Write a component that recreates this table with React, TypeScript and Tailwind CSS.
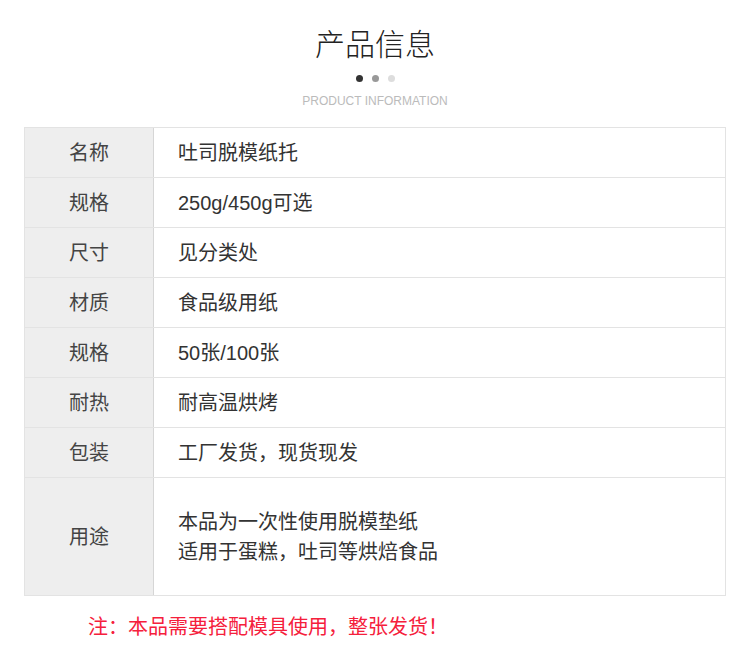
import React from "react";

const rows: [string, string][] = [
  ["名称", "吐司脱模纸托"],
  ["规格", "250g/450g可选"],
  ["尺寸", "见分类处"],
  ["材质", "食品级用纸"],
  ["规格", "50张/100张"],
  ["耐热", "耐高温烘烤"],
  ["包装", "工厂发货，现货现发"],
];

const font = { fontFamily: '"Liberation Sans", "Noto Sans CJK SC", sans-serif' };

export default function App() {
  return (
    <div className="w-[750px] h-[657px] bg-white" style={font}>
      <div className="pt-[21px] flex flex-col items-center">
        <div className="text-[30px] leading-[42px] text-[#222]" style={{ fontFamily: '"Noto Sans CJK SC", sans-serif', fontWeight: 300 }}>产品信息</div>
        <div className="mt-[12px] flex gap-[9px]">
          <span className="w-[7px] h-[7px] rounded-full bg-[#333]" />
          <span className="w-[7px] h-[7px] rounded-full bg-[#999]" />
          <span className="w-[7px] h-[7px] rounded-full bg-[#ddd]" />
        </div>
        <div className="mt-[12px] text-[12px] leading-[14px] text-[#bbb]">
          PRODUCT INFORMATION
        </div>
      </div>
      <div className="mx-[24px] mt-[19px] w-[702px] border border-[#e3e3e3]">
        {rows.map(([k, v], i) => (
          <div key={i} className="flex h-[50px] border-b border-[#e3e3e3]">
            <div className="w-[129px] bg-[#eeeeee] border-r border-[#d6d6d6] flex items-center justify-center text-[20px] text-[#444]">
              {k}
            </div>
            <div className="flex-1 flex items-center pl-[24px] text-[20px] text-[#333]">{v}</div>
          </div>
        ))}
        <div className="flex h-[117px]">
          <div className="w-[129px] bg-[#eeeeee] border-r border-[#d6d6d6] flex items-center justify-center text-[20px] text-[#444]">
            用途
          </div>
          <div className="flex-1 flex flex-col justify-center pl-[24px] text-[20px] leading-[30px] text-[#333]">
            <div>本品为一次性使用脱模垫纸</div>
            <div>适用于蛋糕，吐司等烘焙食品</div>
          </div>
        </div>
      </div>
      <div className="mt-[17px] pl-[88px] text-[20px] leading-[28px] text-[#f5203c]">注：本品需要搭配模具使用，整张发货！</div>
    </div>
  );
}
